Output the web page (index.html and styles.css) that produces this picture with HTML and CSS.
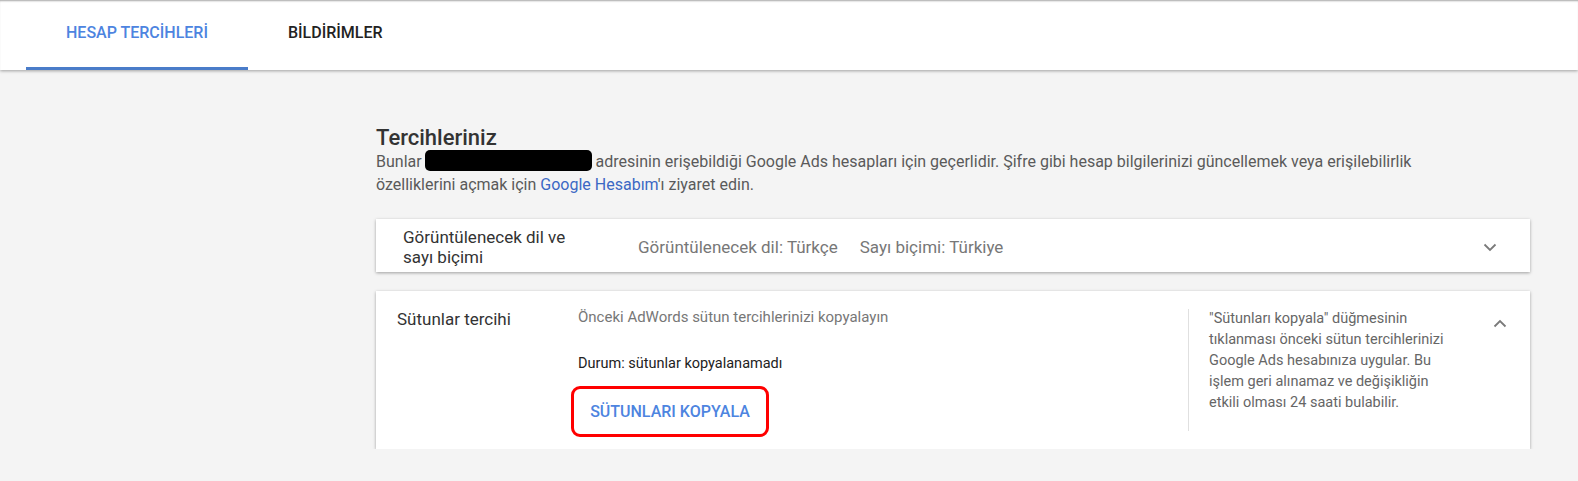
FILE: index.html
```html
<!DOCTYPE html>
<html>
<head>
  <title>Hesap tercihleri</title>
  <link rel="stylesheet" href="styles.css">
</head>
<body>
  <div class="header">
    <div class="tab active">HESAP TERCİHLERİ</div>
    <div class="tab">BİLDİRİMLER</div>
  </div>

  <div class="main">
    <h2 class="title">Tercihleriniz</h2>
    <div class="intro">
      Bunlar <span class="redacted"></span> adresinin erişebildiği Google Ads hesapları için geçerlidir. Şifre gibi hesap bilgilerinizi güncellemek veya erişilebilirlik<br>özelliklerini açmak için <a href="#">Google Hesabım</a>'ı ziyaret edin.
    </div>

    <div class="card card-lang">
      <div class="card-label">Görüntülenecek dil ve sayı biçimi</div>
      <div class="card-value">Görüntülenecek dil: Türkçe</div>
      <div class="card-value">Sayı biçimi: Türkiye</div>
      <svg class="chevron chevron-down" width="14" height="9" viewBox="0 0 14 9">
        <polyline points="1.5,1.5 7,7 12.5,1.5" fill="none" stroke="#7a7a7a" stroke-width="1.8"/>
      </svg>
    </div>

    <div class="card card-cols">
      <div class="cols-label">Sütunlar tercihi</div>
      <div class="cols-body">
        <div class="cols-hint">Önceki AdWords sütun tercihlerinizi kopyalayın</div>
        <div class="cols-status">Durum: sütunlar kopyalanamadı</div>
        <button class="copy-btn">SÜTUNLARI KOPYALA</button>
      </div>
      <div class="cols-help">
        <p>"Sütunları kopyala" düğmesinin tıklanması önceki sütun tercihlerinizi Google Ads hesabınıza uygular. Bu işlem geri alınamaz ve değişikliğin etkili olması 24 saati bulabilir.</p>
      </div>
      <svg class="chevron chevron-up" width="14" height="9" viewBox="0 0 14 9">
        <polyline points="1.5,7.5 7,2 12.5,7.5" fill="none" stroke="#7a7a7a" stroke-width="1.8"/>
      </svg>
    </div>
  </div>
</body>
</html>
```

FILE: styles.css
```css
body {
  margin: 0;
  background-color: #f4f4f4;
  font-family: Roboto, "Liberation Sans", Arial, sans-serif;
  color: #333;
}
.header {
  height: 70px;
  background-color: #fff;
  display: flex;
  padding-left: 26px;
  box-shadow: inset 0 2px 2px -1px rgba(0,0,0,0.35), 0 1px 3px rgba(0,0,0,0.35);
  position: relative;
}
.tab {
  display: flex;
  align-items: center;
  padding: 0 40px 3px 40px;
  font-size: 16px;
  font-weight: 500;
  color: #222;
  box-sizing: border-box;
  height: 70px;
  border-bottom: 3px solid transparent;
}
.tab.active {
  color: #4d84e0;
  border-bottom-color: #4a7cc9;
}
.main {
  padding: 55px 0 0 376px;
  width: 1154px;
}
.title {
  margin: 0;
  font-size: 22px;
  font-weight: 500;
  line-height: 25px;
  color: #333;
}
.intro {
  max-width: 1100px;
  font-size: 16px;
  line-height: 23px;
  color: #5a5a5a;
}
.intro a {
  color: #3b68c4;
  text-decoration: none;
}
.redacted {
  display: inline-block;
  width: 167px;
  height: 21px;
  background-color: #000;
  border-radius: 5px;
  vertical-align: -4px;
  margin-left: -1px;
}
.card {
  background-color: #fff;
  box-shadow: 0 1px 3px rgba(0,0,0,0.35);
  display: flex;
}
.card-lang {
  margin-top: 23px;
  align-items: center;
  padding: 8px 0 5px 27px;
  font-size: 17px;
  line-height: 20px;
}
.card-label {
  width: 185px;
  margin-right: 50px;
  color: #333;
}
.card-value {
  color: #777;
  margin-right: 22px;
}
.chevron {
  flex-shrink: 0;
}
.chevron-down {
  margin-left: auto;
  margin-right: 33px;
}
.card-cols {
  margin-top: 19px;
  padding: 18px 0 18px 21px;
  align-items: stretch;
}
.cols-label {
  width: 181px;
  font-size: 17px;
  line-height: 20px;
  color: #333;
}
.cols-body {
  flex-grow: 1;
  display: flex;
  flex-direction: column;
  align-items: flex-start;
  font-size: 14.5px;
  line-height: 17px;
}
.cols-hint {
  color: #777;
  font-size: 15px;
}
.cols-status {
  color: #222;
  margin-top: 29px;
}
.copy-btn {
  margin-top: 20px;
  margin-left: -1px;
  width: 186px;
  height: 39px;
  padding: 0;
  border: none;
  border-radius: 3px;
  background-color: #fff;
  font-family: inherit;
  font-size: 16px;
  font-weight: 500;
  color: #4d84e0;
  outline: 3px solid #f00;
  outline-offset: 3px;
  cursor: pointer;
}
.cols-help {
  width: 242px;
  border-left: 1px solid #e0e0e0;
  padding-left: 20px;
  font-size: 14.5px;
  line-height: 21px;
  color: #666;
}
.cols-help p {
  margin: -1px 0 0;
}
.chevron-up {
  margin: 10px 23px 0 42px;
}
```
